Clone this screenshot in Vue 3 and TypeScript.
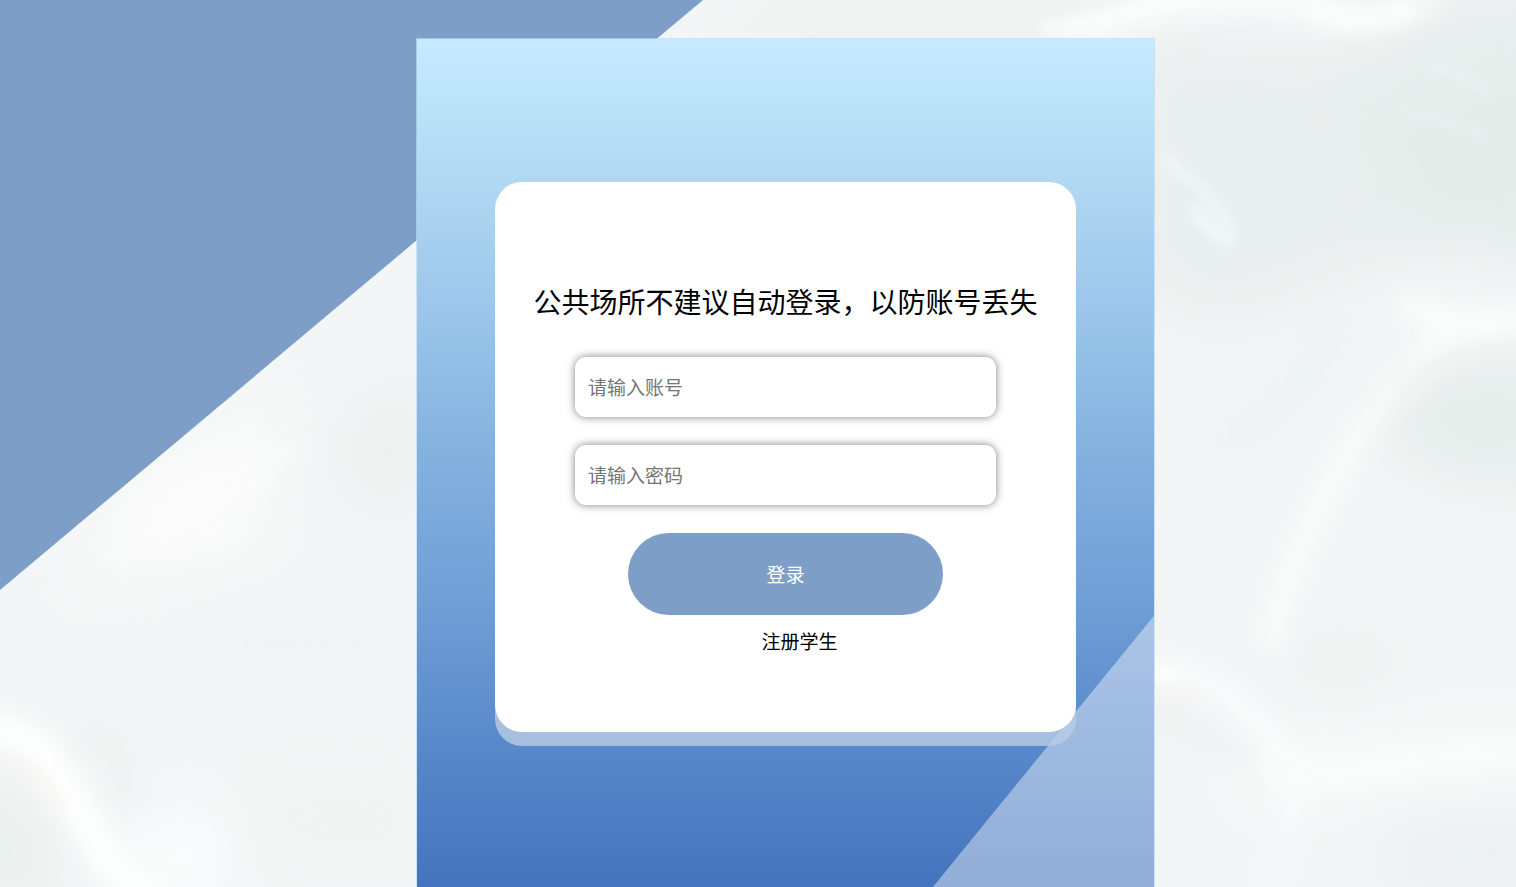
<script setup lang="ts">
import { ref } from 'vue'

const account = ref('')
const password = ref('')
</script>

<template>
  <main class="page">
    <svg class="backdrop" viewBox="0 0 1516 887" preserveAspectRatio="none" aria-hidden="true">
      <defs>
        <filter id="wide" x="-50%" y="-50%" width="200%" height="200%">
          <feGaussianBlur stdDeviation="30" />
        </filter>
        <filter id="mid" x="-50%" y="-50%" width="200%" height="200%">
          <feGaussianBlur stdDeviation="13" />
        </filter>
        <filter id="fine" x="-50%" y="-50%" width="200%" height="200%">
          <feGaussianBlur stdDeviation="6" />
        </filter>
      </defs>
      <rect width="1516" height="887" fill="#f3f6f6" />
      <g filter="url(#wide)">
        <path d="M1130 30 L1340 50 L1420 -20 L1580 -20 L1580 280 L1440 250 L1330 290 L1220 330 L1130 290Z" fill="#e9efee" />
        <path d="M1340 110 L1560 30 L1560 250 L1400 230Z" fill="#e4ecea" />
        <path d="M1410 370 L1560 350 L1560 490 L1450 480 L1380 440Z" fill="#e5edeb" />
        <path d="M700 40 L800 0 L1080 0 L1140 40Z" fill="#edf0ed" />
        <path d="M330 430 L430 370 L430 510 L350 500Z" fill="#ebf0ef" />
        <path d="M1380 820 L1560 800 L1560 900 L1400 900Z" fill="#ebf0f0" />
        <path d="M1310 620 L1420 640 L1380 700 L1270 690Z" fill="#eef3f2" />
        <path d="M-40 790 L30 790 L60 900 L-40 900Z" fill="#e8efed" />
        <path d="M130 470 L290 380 L260 560 L60 590Z" fill="#fafbfa" />
        <path d="M200 600 L400 600 L420 680 L200 690Z" fill="#f0f4f4" />
        <path d="M230 780 L430 760 L430 880 L240 860Z" fill="#f1f4f3" />
        <path d="M120 830 L230 800 L230 900 L130 900Z" fill="#fafdfd" />
        <path d="M1240 740 L1540 730 L1540 780 L1250 800Z" fill="#fafcfb" />
      </g>
      <g filter="url(#mid)" fill="none">
        <path d="M-30 728 C40 720 60 780 90 830 C110 870 130 890 170 910" stroke="#ffffff" stroke-width="32" />
        <path d="M1516 320 C1420 320 1390 390 1350 450 C1300 540 1280 590 1270 650" stroke="#fbfefd" stroke-width="20" opacity="0.85" />
        <path d="M1400 295 C1440 330 1480 325 1540 318" stroke="#ffffff" stroke-width="24" opacity="0.8" />
        <path d="M1130 668 C1200 665 1240 690 1290 770" stroke="#fcfefd" stroke-width="22" opacity="0.7" />
        <path d="M1280 775 C1360 780 1440 755 1540 750" stroke="#fcfefd" stroke-width="22" opacity="0.7" />
        <path d="M1290 770 C1300 820 1280 850 1270 890" stroke="#f9fcfb" stroke-width="24" opacity="0.6" />
        <path d="M80 730 C130 740 120 780 125 805" stroke="#eef2f1" stroke-width="24" />
        <path d="M300 440 C240 490 200 530 140 550" stroke="#fcfcfb" stroke-width="20" opacity="0.6" />
        <path d="M1150 710 C1180 720 1210 750 1250 755" stroke="#ecf2f1" stroke-width="20" />
        <path d="M1060 40 C1130 18 1180 -4 1290 0 C1330 26 1390 30 1440 -8" stroke="#ffffff" stroke-width="20" opacity="0.9" />
        <path d="M1220 440 C1280 420 1310 370 1340 330" stroke="#ecf2f3" stroke-width="28" />
      </g>
      <g filter="url(#fine)" fill="none">
        <path d="M1040 28 C1110 24 1140 0 1210 -4" stroke="#ffffff" stroke-width="12" opacity="0.6" />
        <path d="M1310 4 Q1360 32 1412 8" stroke="#fbfefb" stroke-width="20" opacity="0.7" />
        <path d="M1330 43 H1400" stroke="#f4f1ee" stroke-width="8" opacity="0.6" />
        <path d="M1160 155 C1190 180 1225 200 1232 240" stroke="#f1f6f6" stroke-width="10" />
        <path d="M1195 205 C1205 230 1222 235 1230 245" stroke="#f2f7f7" stroke-width="14" />
        <path d="M1420 60 L1490 90" stroke="#edf2f2" stroke-width="8" />
        <path d="M1400 110 L1490 136" stroke="#ebf0f0" stroke-width="10" opacity="0.7" />
        <path d="M1516 350 C1450 352 1420 380 1385 430" stroke="#f3f3f0" stroke-width="10" opacity="0.7" />
        <path d="M-10 756 C30 758 50 780 64 810" stroke="#f8f5f1" stroke-width="8" opacity="0.7" />
        <path d="M1150 674 H1178" stroke="#ffffff" stroke-width="12" opacity="0.8" />
        <path d="M1156 696 H1200" stroke="#f8f5f2" stroke-width="9" opacity="0.7" />
      </g>
      <path d="M0 0 H703 L0 590Z" fill="#7d9ec7" />
    </svg>

    <section class="panel">
      <form class="card" @submit.prevent>
        <h1 class="notice">公共场所不建议自动登录，以防账号丢失</h1>
        <div class="fields">
          <input v-model="account" class="field" type="text" placeholder="请输入账号" aria-label="账号" />
          <input v-model="password" class="field" type="password" placeholder="请输入密码" aria-label="密码" />
          <button class="submit" type="submit">登录</button>
        </div>
        <a class="register" href="#">注册学生</a>
      </form>
    </section>
  </main>
</template>

<style>
body {
  margin: 0;
}
</style>

<style scoped>
.page {
  position: relative;
  box-sizing: border-box;
  display: grid;
  grid-template-columns: 416fr 739fr 361fr;
  min-height: 100vh;
  padding-top: 38px;
  overflow: hidden;
  font-family: "Noto Sans CJK SC", sans-serif;
}

.backdrop {
  position: absolute;
  top: 0;
  left: 0;
  width: 100%;
  height: 100%;
}

.panel {
  position: relative;
  grid-column: 2;
  box-sizing: border-box;
  padding: 143px 78px;
  border: 1px solid rgba(185, 220, 245, 0.7);
  border-bottom: 0;
  background: linear-gradient(#c6ebff 0%, #b0d8f3 17%, #87b3e0 47%, #72a0d7 65%, #5889ca 83%, #4474bd 100%) padding-box;
}

.panel::after {
  content: "";
  position: absolute;
  right: 0;
  bottom: 0;
  width: 30%;
  height: 32%;
  background: rgba(255, 255, 255, 0.42);
  clip-path: polygon(100% 0, 100% 100%, 0 100%);
}

.card {
  position: relative;
  z-index: 1;
  box-sizing: border-box;
  display: flex;
  flex-direction: column;
  align-items: center;
  min-height: 550px;
  padding: 99px 0 64px;
  border-radius: 27px;
  background: #fff;
  box-shadow: 0 14px 0 rgba(185, 205, 229, 0.8);
}

.notice {
  margin: 0 0 36px;
  font-size: 28px;
  font-weight: 400;
  line-height: 40px;
  color: #000;
  text-align: center;
}

.fields {
  display: flex;
  flex-direction: column;
  align-items: center;
  gap: 28px;
  width: 72.5%;
}

.field {
  box-sizing: border-box;
  width: 100%;
  height: 60px;
  padding: 0 13px 2px;
  border: 0;
  border-radius: 11px;
  outline: 0;
  background: #fff;
  box-shadow: 0 0 8px rgba(0, 0, 0, 0.5);
  font-family: inherit;
  font-size: 19px;
  color: #000;
}

.field::placeholder {
  color: #757575;
  opacity: 1;
}

.submit {
  width: 75%;
  height: 82px;
  padding: 0 0 2px;
  border: 0;
  border-radius: 41px;
  background: #7d9ec7;
  font-family: inherit;
  font-size: 19px;
  color: #fff;
  cursor: pointer;
}

.register {
  margin-top: 12px;
  padding-left: 28px;
  font-size: 19px;
  line-height: 28px;
  color: #000;
  text-decoration: none;
}
</style>
